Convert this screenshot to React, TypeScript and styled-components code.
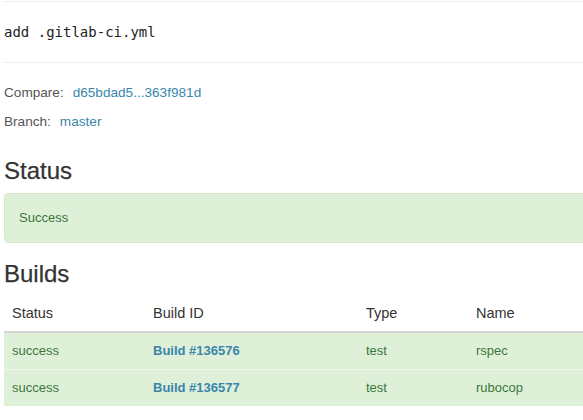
import React from "react";
import styled, { createGlobalStyle } from "styled-components";

const GlobalStyle = createGlobalStyle`
  html, body {
    margin: 0;
    padding: 0;
    background: #fff;
    overflow: hidden;
  }
  body {
    font-family: "Liberation Sans", Arial, sans-serif;
    color: #333;
  }
`;

const Page = styled.div`
  width: 600px;
  padding: 1px 0 0 4px;
`;

const CommitBlock = styled.div`
  border-top: 1px solid #eee;
  border-bottom: 1px solid #eee;
  padding: 20px 0 20px 0;
  font-family: "DejaVu Sans Mono", "Liberation Mono", monospace;
  font-size: 14px;
  line-height: 20px;
  color: #222;
`;

const InfoList = styled.div`
  margin-top: 20px;
  display: flex;
  flex-direction: column;
  gap: 9px;
`;

const InfoRow = styled.div`
  font-size: 13.6px;
  line-height: 20px;
  color: #555;
  display: flex;
  gap: 9px;
`;

const Link = styled.a<{ $bold?: boolean }>`
  color: #3a86ab;
  text-decoration: none;
  font-weight: ${(p) => (p.$bold ? 700 : 400)};
`;

const Heading = styled.h3<{ $top: number; $bottom: number }>`
  font-size: 24px;
  font-weight: 500;
  line-height: 26px;
  margin: ${(p) => p.$top}px 0 ${(p) => p.$bottom}px 0;
  color: #333;
  -webkit-text-stroke: 0.25px #333;
`;

const Alert = styled.div`
  background: #dff0d8;
  border: 1px solid #d6e9c6;
  border-radius: 4px;
  color: #3c763d;
  padding: 14px;
  font-size: 13px;
  line-height: 20px;
`;

const Table = styled.table`
  width: 100%;
  border-collapse: collapse;
  table-layout: fixed;
`;

const HeadCell = styled.th<{ $w?: number }>`
  box-sizing: border-box;
  text-align: left;
  font-weight: 400;
  font-size: 14.5px;
  line-height: 20px;
  padding: 8px;
  color: #333;
  border-bottom: 2px solid #d4d4d4;
  width: ${(p) => (p.$w ? `${p.$w}px` : "auto")};
`;

const Row = styled.tr`
  background: #dff0d8;
  & + & td {
    border-top: 1px solid #f0f6ec;
  }
`;

const Cell = styled.td`
  box-sizing: border-box;
  padding: 8px;
  font-size: 13px;
  line-height: 20px;
  color: #3c763d;
`;

const builds = [
  { status: "success", id: 136576, type: "test", name: "rspec" },
  { status: "success", id: 136577, type: "test", name: "rubocop" },
];

export default function App() {
  return (
    <>
      <GlobalStyle />
      <Page>
        <CommitBlock>add .gitlab-ci.yml</CommitBlock>
        <InfoList>
          <InfoRow>
            <span>Compare:</span>
            <Link href="#">d65bdad5...363f981d</Link>
          </InfoRow>
          <InfoRow>
            <span>Branch:</span>
            <Link href="#">master</Link>
          </InfoRow>
        </InfoList>
        <Heading $top={26} $bottom={9}>Status</Heading>
        <Alert>Success</Alert>
        <Heading $top={18} $bottom={8}>Builds</Heading>
        <Table>
          <thead>
            <tr>
              <HeadCell $w={141}>Status</HeadCell>
              <HeadCell $w={213}>Build ID</HeadCell>
              <HeadCell $w={110}>Type</HeadCell>
              <HeadCell>Name</HeadCell>
            </tr>
          </thead>
          <tbody>
            {builds.map((b) => (
              <Row key={b.id}>
                <Cell>{b.status}</Cell>
                <Cell>
                  <Link href="#" $bold>
                    Build #{b.id}
                  </Link>
                </Cell>
                <Cell>{b.type}</Cell>
                <Cell>{b.name}</Cell>
              </Row>
            ))}
          </tbody>
        </Table>
      </Page>
    </>
  );
}
